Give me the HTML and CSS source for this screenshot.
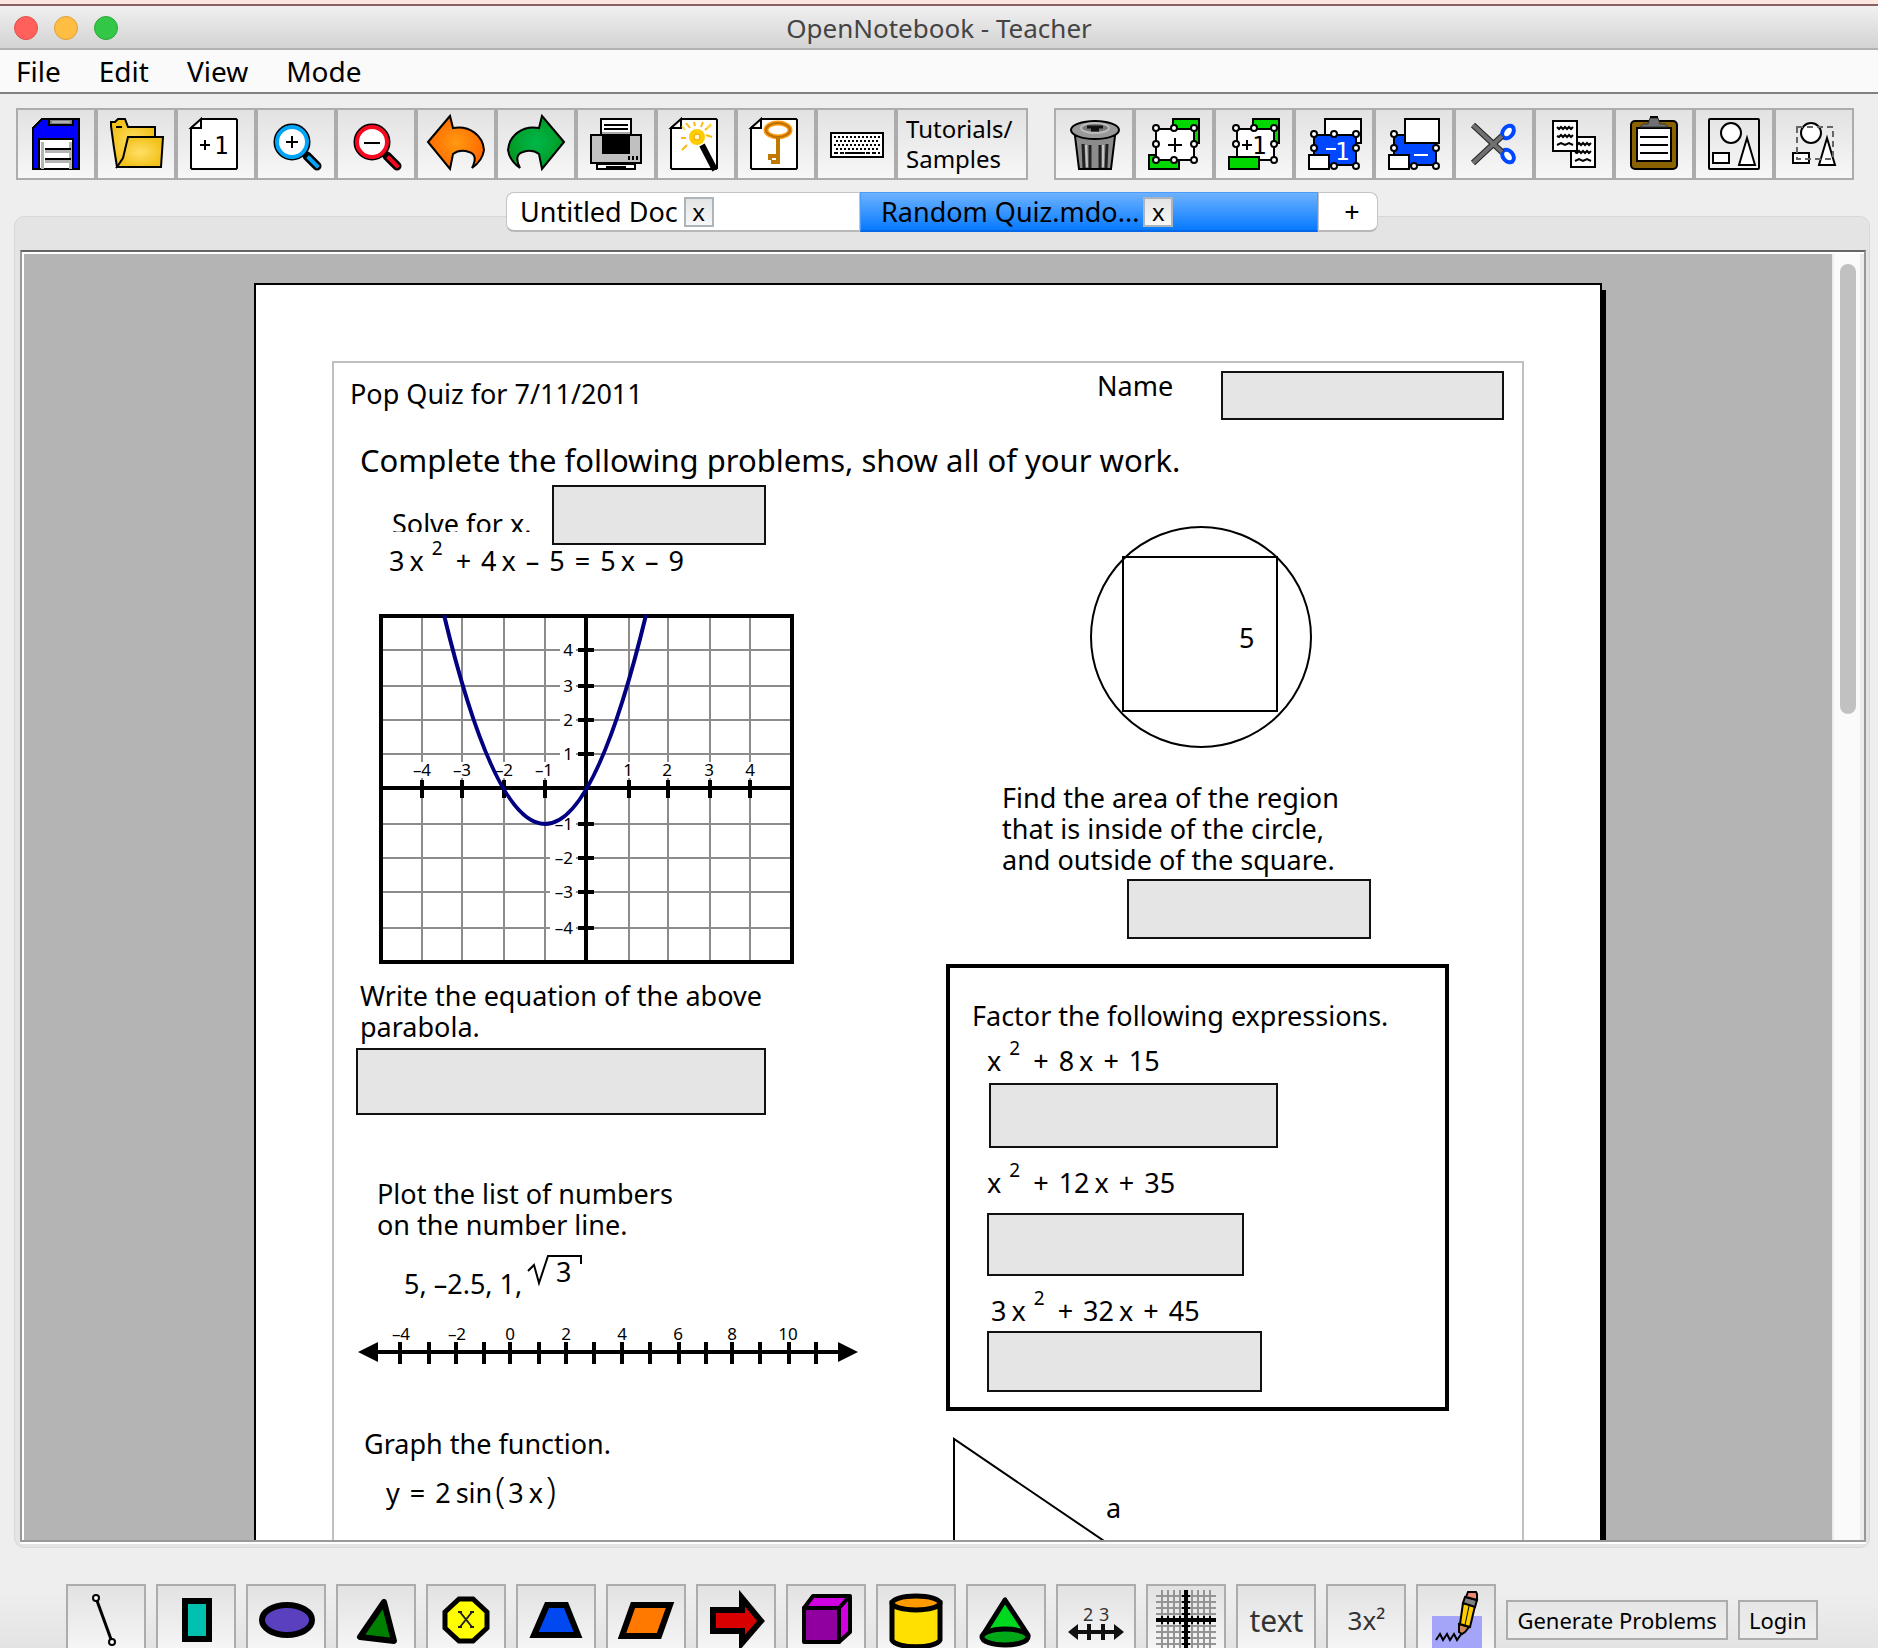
FILE: index.html
```html
<!DOCTYPE html>
<html lang="en">
<head>
<meta charset="utf-8">
<title>OpenNotebook - Teacher</title>
<link rel="stylesheet" href="styles.css">
</head>
<body>
<svg class="defs" aria-hidden="true">
  <defs>
    <radialGradient id="orange"><stop offset="0" stop-color="#ff9a10"/><stop offset="1" stop-color="#ff6a00"/></radialGradient>
    <radialGradient id="green"><stop offset="0" stop-color="#00b84a"/><stop offset="1" stop-color="#009a24"/></radialGradient>
    <radialGradient id="folder"><stop offset="0" stop-color="#ffe066"/><stop offset="1" stop-color="#f2c21c"/></radialGradient>
    <symbol id="page" viewBox="0 0 80 72">
      <path d="M26 11H60L61 12V60L60 61H16L15 60V20Z" fill="#fff" stroke="#000" stroke-width="2"/>
      <path d="M15 20L25 11V20Z" fill="#fff" stroke="#000" stroke-width="2"/>
    </symbol>
    <symbol id="turn" viewBox="0 0 80 72">
      <path d="M12 34L34 8L37 20C54 17 67 28 68 42C67 50 63 55 56 60C60 52 60 46 53 44C47 42 41 43 37 46L34 61Z" stroke="#000" stroke-width="2"/>
    </symbol>
    <symbol id="glass" viewBox="0 0 80 72">
      <path d="M51 48L61 58" stroke="#000" stroke-width="9" stroke-linecap="round"/>
      <path d="M53 50L61 58" stroke="currentColor" stroke-width="4" stroke-linecap="square"/>
      <circle cx="36" cy="34" r="15" fill="#fff" stroke="#000" stroke-width="7"/>
      <circle cx="36" cy="34" r="15" fill="#fff" stroke="currentColor" stroke-width="4"/>
    </symbol>
    <symbol id="shapes" viewBox="0 0 80 72">
      <circle cx="37" cy="25" r="10" fill="#fff" stroke="#000" stroke-width="2"/>
      <path d="M19 45H35V55H19ZM53 30L61 57H45Z" fill="#fff" stroke="#000" stroke-width="2"/>
    </symbol>
  </defs>
</svg>
<div class="window">
  <header class="titlebar">
    <div class="lights"><button class="light red" aria-label="Close"></button><button class="light amber" aria-label="Minimize"></button><button class="light lime" aria-label="Zoom"></button></div>
    <h1 class="title">OpenNotebook - Teacher</h1>
  </header>
  <nav class="menubar">
    <button class="menu">File</button><button class="menu">Edit</button><button class="menu">View</button><button class="menu">Mode</button>
  </nav>
  <div class="toolbars">
    <div class="group">
      <button class="tool" aria-label="Save"><svg class="icon crisp" viewBox="0 0 80 72"><path d="M26 11H63V61H17V20Z" fill="#00f" stroke="#000" stroke-width="2"/><path d="M33 11H57V17H33Z" fill="#808080" stroke="#000" stroke-width="2"/><path d="M36 14H54" stroke="#b0b0b0" stroke-width="2"/><path d="M23 61V31H57V61Z" fill="#fff" stroke="#000" stroke-width="2"/><path d="M26 61V34M54 34V61M29 43H55M29 53H55" stroke="#b4b4b4" stroke-width="3"/><path d="M29 41H55M29 51H55" stroke="#000" stroke-width="2"/></svg></button>
      <button class="tool" aria-label="Open"><svg class="icon" viewBox="0 0 80 72"><path d="M21 59L18 40L15 18V14H19L22 11H29L32 19H59V30L40 45Z" fill="url(#folder)" stroke="#000" stroke-width="2"/><path d="M20 19H26" stroke="#000" stroke-width="2"/><path d="M32 29H67L65 59H21L27 50Z" fill="url(#folder)" stroke="#000" stroke-width="2"/></svg></button>
      <button class="tool" aria-label="Add page"><svg class="icon" viewBox="0 0 80 72"><use href="#page"/><path d="M24 37H34M29 32V42" stroke="#000" stroke-width="2"/><text class="pix" x="38" y="46">1</text></svg></button>
      <button class="tool" aria-label="Zoom in"><svg class="icon sky" viewBox="0 0 80 72"><use href="#glass"/><path d="M30 34H42M36 28V40" stroke="#000" stroke-width="2"/></svg></button>
      <button class="tool" aria-label="Zoom out"><svg class="icon ruby" viewBox="0 0 80 72"><use href="#glass"/><path d="M28 35H44" stroke="#000" stroke-width="2"/></svg></button>
      <button class="tool" aria-label="Undo"><svg class="icon" viewBox="0 0 80 72"><use href="#turn" fill="url(#orange)"/></svg></button>
      <button class="tool" aria-label="Redo"><svg class="icon" viewBox="0 0 80 72"><g transform="matrix(-1 0 0 1 80 0)"><use href="#turn" fill="url(#green)"/></g></svg></button>
      <button class="tool" aria-label="Print"><svg class="icon crisp" viewBox="0 0 80 72"><path d="M15 27H65V55H15Z" fill="#c0c0c0" stroke="#000" stroke-width="2"/><path d="M25 27V11H55V27" fill="#fff" stroke="#000" stroke-width="2"/><path d="M28 17H52M28 21H52" stroke="#000" stroke-width="2"/><path d="M26 24H54V27H26Z" fill="#aaa"/><path d="M26 26H54V46H26Z"/><path d="M53 48V52M57 48V52M61 48V52" stroke="#000" stroke-width="2"/><path d="M21 56H59V61H21Z" fill="#fff" stroke="#000" stroke-width="2"/><path d="M30 59H50" stroke="#000" stroke-width="2"/></svg></button>
      <button class="tool" aria-label="Problem wizard"><svg class="icon" viewBox="0 0 80 72"><use href="#page"/><g stroke="#fdb913" stroke-width="2"><path d="M30 15L34 20M38 14L39 18M47 14L45 19M55 17L49 22M25 30H30M50 27L56 29M31 37L26 42"/><path d="M51 20L55 16M29 22L26 18" stroke="#ffd75a"/></g><path d="M46 37L59 62" stroke="#000" stroke-width="6"/><circle cx="41" cy="29" r="8" fill="#fc0"/><circle cx="41" cy="29" r="3" fill="#fff6c0" stroke="#f0a000"/></svg></button>
      <button class="tool" aria-label="Answer key"><svg class="icon" viewBox="0 0 80 72"><use href="#page"/><ellipse cx="42" cy="22" rx="12" ry="7" fill="#fff" stroke="#ff9a10" stroke-width="5"/><ellipse cx="42" cy="22" rx="12" ry="7" fill="none" stroke="#b87000" stroke-width="2"/><path d="M42 29V56M42 48H34V52M42 54H35" fill="none" stroke="#c07800" stroke-width="4"/></svg></button>
      <button class="tool" aria-label="On screen keyboard"><svg class="icon crisp" viewBox="0 0 80 72"><path d="M15 25H67V49H15Z" fill="#fff" stroke="#000" stroke-width="2"/><path d="M18 29H64M18 37H64" stroke="#000" stroke-width="2" stroke-dasharray="2 2"/><path d="M20 33H64M20 41H64" stroke="#000" stroke-width="2" stroke-dasharray="2 2"/><path d="M18 45H28M50 45H64" stroke="#000" stroke-width="2" stroke-dasharray="4 2"/><path d="M29 45H49" stroke="#000" stroke-width="2"/></svg></button>
      <button class="tool wide">Tutorials/<br>Samples</button>
    </div>
    <div class="group">
      <button class="tool" aria-label="Delete"><svg class="icon" viewBox="0 0 80 72"><path d="M21 28L25 61H57L61 28Z" fill="#8c8c8c" stroke="#000" stroke-width="2"/><path d="M29 36L30 60M36 37V60M46 37V60M53 36L52 60" stroke="#222" stroke-width="3"/><path d="M32 37L33 59M49 37V59" stroke="#c4c4c4" stroke-width="2"/><ellipse cx="41" cy="22" rx="24" ry="9" fill="#999" stroke="#000" stroke-width="2"/><ellipse cx="41" cy="20" rx="14" ry="5" fill="#777" stroke="#bbb" stroke-width="2"/><path d="M33 19H49M37 22H45" stroke="#111" stroke-width="3"/></svg></button>
      <button class="tool" aria-label="Bring to front"><svg class="icon" viewBox="0 0 80 72"><g stroke="#000" stroke-width="2"><path d="M39 11H65V35H39ZM15 47H45V61H15Z" fill="#00d800"/><path d="M22 21H60V52H22Z" fill="#fff"/><path d="M34 37H48M41 30V44"/></g><g class="knob"><circle cx="22" cy="20" r="3"/><circle cx="40" cy="20" r="3"/><circle cx="60" cy="20" r="3"/><circle cx="22" cy="36" r="3"/><circle cx="60" cy="36" r="3"/><circle cx="22" cy="52" r="3"/><circle cx="40" cy="52" r="3"/><circle cx="60" cy="52" r="3"/></g></svg></button>
      <button class="tool" aria-label="Bring forward"><svg class="icon" viewBox="0 0 80 72"><g stroke="#000" stroke-width="2"><path d="M39 11H65V35H39Z" fill="#00d800"/><path d="M23 21H60V52H23Z" fill="#fff"/><path d="M15 49H45V61H15Z" fill="#00d800"/><path d="M28 37H38M33 32V42"/></g><text class="pix" x="38" y="46">1</text><g class="knob"><circle cx="22" cy="20" r="3"/><circle cx="40" cy="20" r="3"/><circle cx="60" cy="20" r="3"/><circle cx="22" cy="36" r="3"/><circle cx="60" cy="36" r="3"/><circle cx="60" cy="52" r="3"/></g></svg></button>
      <button class="tool" aria-label="Send backward"><svg class="icon" viewBox="0 0 80 72"><g stroke="#000" stroke-width="2"><path d="M31 11H67V35H31Z" fill="#fff"/><path d="M20 27H62V57H20Z" fill="#0048ff"/><path d="M15 47H35V61H15Z" fill="#fff"/><path d="M32 41H42" stroke="#fff"/></g><text class="pix pale" x="41" y="52">1</text><g class="knob"><circle cx="20" cy="26" r="3"/><circle cx="40" cy="26" r="3"/><circle cx="62" cy="26" r="3"/><circle cx="20" cy="40" r="3"/><circle cx="62" cy="40" r="3"/><circle cx="40" cy="58" r="3"/><circle cx="62" cy="58" r="3"/></g></svg></button>
      <button class="tool" aria-label="Send to back"><svg class="icon" viewBox="0 0 80 72"><g stroke="#000" stroke-width="2"><path d="M20 27H62V57H20Z" fill="#0048ff"/><path d="M31 11H65V35H31ZM15 47H35V61H15Z" fill="#fff"/><path d="M40 47H54" stroke="#fff"/></g><g class="knob"><circle cx="20" cy="26" r="3"/><circle cx="20" cy="40" r="3"/><circle cx="62" cy="40" r="3"/><circle cx="40" cy="58" r="3"/><circle cx="62" cy="58" r="3"/></g></svg></button>
      <button class="tool" aria-label="Cut"><svg class="icon" viewBox="0 0 80 72"><g fill="#fff" stroke="#0048ff" stroke-width="4"><ellipse cx="54" cy="24" rx="7" ry="5" transform="rotate(-50 54 24)"/><ellipse cx="54" cy="48" rx="7" ry="5" transform="rotate(50 54 48)"/></g><path d="M19 17L48 44M19 55L48 28" stroke="#222" stroke-width="6"/><path d="M19 17L48 44M19 55L48 28" stroke="#707070" stroke-width="4"/></svg></button>
      <button class="tool" aria-label="Copy"><svg class="icon" viewBox="0 0 80 72"><g stroke="#000" stroke-width="2"><path d="M37 29H61V59H37Z" fill="#fff"/><path d="M41 35l2 2 2-2 2 2 2-2 2 2 2-2 2 2 2-2M41 44l2 1 2-2 2 2 2-2 2 2 2-2 2 2 2-2M41 53l4-2 4 2 4-2 4 2" fill="none"/><path d="M19 13H43V43H19Z" fill="#fff"/><path d="M23 19l2 2 2-2 2 2 2-2 2 2 2-2 2 2 2-2M23 28l2 1 2-2 2 2 2-2 2 2 2-2 2 2 2-2M23 37l4-2 4 2 4-2 4 2" fill="none"/></g></svg></button>
      <button class="tool" aria-label="Paste"><svg class="icon" viewBox="0 0 80 72"><rect x="17" y="13" width="46" height="48" rx="4" fill="#8b6200" stroke="#000" stroke-width="2"/><path d="M23 20H57V53H23Z" fill="#fff" stroke="#000" stroke-width="2"/><path d="M26 29H54M26 37H54M26 45H54" stroke="#000" stroke-width="2"/><path d="M26 19L29 16H34L36 10H44L46 16H51L54 19Z" fill="#707070" stroke="#333"/><path d="M36 9H44" stroke="#000" stroke-width="2"/></svg></button>
      <button class="tool" aria-label="Group"><svg class="icon" viewBox="0 0 80 72"><rect x="15" y="11" width="50" height="50" rx="1" fill="none" stroke="#000" stroke-width="2"/><use href="#shapes"/></svg></button>
      <button class="tool" aria-label="Ungroup"><svg class="icon" viewBox="0 0 80 72"><use href="#shapes"/><path d="M23 19H59V51H23Z" fill="none" stroke="#666" stroke-width="2" stroke-dasharray="6 4"/></svg></button>
    </div>
  </div>
  <div class="tabs">
    <div class="tab first"><button class="tabname">Untitled Doc</button><button class="close" aria-label="Close Untitled Doc">x</button></div>
    <div class="tab current"><button class="tabname">Random Quiz.mdo...</button><button class="close" aria-label="Close Random Quiz">x</button></div>
    <button class="tab add">+</button>
  </div>
  <main class="pane">
    <div class="viewport">
      <div class="scroller">
        <article class="sheet">
          <div class="margin"></div>
          <p class="obj pop">Pop Quiz for 7/11/2011</p>
          <label class="obj name" for="name">Name</label>
          <input class="obj answer name-box" id="name">
          <h2 class="obj heading">Complete the following problems, show all of your work.</h2>
          <p class="obj solve">Solve for x.</p>
          <input class="obj answer solve-box" aria-label="Solve for x">
          <div class="obj math eq"><span>3</span><span>x</span><sup>2</sup><i>+</i><span>4</span><span>x</span><i>–</i><span>5</span><i>=</i><span>5</span><span>x</span><i>–</i><span>9</span></div>
          <svg class="obj plot" viewBox="378 613 418 353" role="img" aria-label="Graph of a parabola">
            <path d="M422 616V962M462 616V962M504 616V962M545 616V962M629 616V962M668 616V962M710 616V962M750 616V962M381 650H792M381 686H792M381 720H792M381 754H792M381 824H792M381 858H792M381 892H792M381 928H792" stroke="#8c8c8c" stroke-width="2"/>
            <g fill="#fff"><path d="M411 762H434V778H411ZM451 762H474V778H451ZM493 762H516V778H493ZM533 762H556V778H533ZM620 762H636V778H620ZM660 762H676V778H660ZM702 762H718V778H702ZM742 762H758V778H742Z"/><path d="M560 642H576V658H560ZM560 678H576V694H560ZM560 712H576V728H560ZM560 746H576V762H560ZM550 816H576V832H550ZM550 850H576V866H550ZM550 884H576V900H550ZM550 920H576V936H550Z"/></g>
            <path d="M381 616H792V962H381ZM381 788H792M586 616V962" fill="none" stroke="#000" stroke-width="4"/>
            <path d="M422 780V798M462 780V798M504 780V798M545 780V798M629 780V798M668 780V798M710 780V798M750 780V798M578 650H594M578 686H594M578 720H594M578 754H594M578 824H594M578 858H594M578 892H594M578 928H594" stroke="#000" stroke-width="4"/>
            <g class="ticks mid"><text x="422" y="776">–4</text><text x="462" y="776">–3</text><text x="504" y="776">–2</text><text x="544" y="776">–1</text><text x="628" y="776">1</text><text x="667" y="776">2</text><text x="709" y="776">3</text><text x="750" y="776">4</text></g>
            <g class="ticks end"><text x="573" y="656">4</text><text x="573" y="692">3</text><text x="573" y="726">2</text><text x="573" y="760">1</text><text x="573" y="830">–1</text><text x="573" y="864">–2</text><text x="573" y="898">–3</text><text x="573" y="934">–4</text></g>
            <path d="M444 615Q545 1033 646 615" fill="none" stroke="#000080" stroke-width="4"/>
          </svg>
          <p class="obj write">Write the equation of the above<br>parabola.</p>
          <input class="obj answer write-box" aria-label="Equation of the parabola">
          <p class="obj list">Plot the list of numbers<br>on the number line.</p>
          <p class="obj values">5, –2.5, 1,</p>
          <svg class="obj root" viewBox="526 1254 58 38" role="img" aria-label="Square root of 3"><path d="M528 1271L534 1265L539 1283L548 1256H581V1264" fill="none" stroke="#000" stroke-width="2"/><text class="radicand" x="556" y="1282">3</text></svg>
          <svg class="obj numline" viewBox="356 1320 506 46" role="img" aria-label="Number line">
            <path d="M376 1352H840" stroke="#000" stroke-width="4"/>
            <path d="M358 1352L378 1342V1362ZM858 1352L838 1342V1362Z"/>
            <path d="M400 1342V1364M429 1342V1364M456 1342V1364M484 1342V1364M510 1342V1364M539 1342V1364M566 1342V1364M594 1342V1364M622 1342V1364M650 1342V1364M679 1342V1364M706 1342V1364M732 1342V1364M760 1342V1364M789 1342V1364M816 1342V1364" stroke="#000" stroke-width="4"/>
            <g class="ticks mid"><text x="401" y="1340">–4</text><text x="457" y="1340">–2</text><text x="510" y="1340">0</text><text x="566" y="1340">2</text><text x="622" y="1340">4</text><text x="678" y="1340">6</text><text x="732" y="1340">8</text><text x="788" y="1340">10</text></g>
          </svg>
          <p class="obj func">Graph the function.</p>
          <div class="obj math sine"><span>y</span><i>=</i><span>2</span><span>sin</span><b>(</b><span>3</span><span>x</span><b>)</b></div>
          <svg class="obj circle" viewBox="1088 524 226 226" role="img" aria-label="Square inside a circle"><circle cx="1201" cy="637" r="110" fill="none" stroke="#000" stroke-width="2"/><path d="M1123 557H1277V711H1123Z" fill="none" stroke="#000" stroke-width="2"/></svg>
          <p class="obj five">5</p>
          <p class="obj find">Find the area of the region<br>that is inside of the circle,<br>and outside of the square.</p>
          <input class="obj answer find-box" aria-label="Area of the region">
          <div class="obj frame"></div>
          <p class="obj factor">Factor the following expressions.</p>
          <div class="obj math ex1"><span>x</span><sup>2</sup><i>+</i><span>8</span><span>x</span><i>+</i><span>15</span></div>
          <input class="obj answer ex1-box" aria-label="Factor the first expression">
          <div class="obj math ex2"><span>x</span><sup>2</sup><i>+</i><span>12</span><span>x</span><i>+</i><span>35</span></div>
          <input class="obj answer ex2-box" aria-label="Factor the second expression">
          <div class="obj math ex3"><span>3</span><span>x</span><sup>2</sup><i>+</i><span>32</span><span>x</span><i>+</i><span>45</span></div>
          <input class="obj answer ex3-box" aria-label="Factor the third expression">
          <svg class="obj triangle" viewBox="950 1436 300 200" role="img" aria-label="Right triangle"><path d="M955 1636V1439L1245 1636Z" fill="none" stroke="#000" stroke-width="2"/></svg>
          <p class="obj side">a</p>
        </article>
      </div>
      <div class="scrollbar"><div class="thumb"></div></div>
    </div>
  </main>
  <footer class="palette">
    <button class="tool" aria-label="Line"><svg class="icon" viewBox="0 0 80 72"><path d="M30 14L46 58" stroke="#000" stroke-width="3"/><g class="knob"><circle cx="30" cy="14" r="3"/><circle cx="46" cy="58" r="3"/></g></svg></button>
    <button class="tool" aria-label="Rectangle"><svg class="icon" viewBox="0 0 80 72"><path d="M29 17H53V55H29Z" fill="#00c0b0" stroke="#000" stroke-width="6"/></svg></button>
    <button class="tool" aria-label="Oval"><svg class="icon" viewBox="0 0 80 72"><ellipse cx="41" cy="36" rx="25" ry="15" fill="#5a40bf" stroke="#000" stroke-width="6"/></svg></button>
    <button class="tool" aria-label="Triangle"><svg class="icon" viewBox="0 0 80 72"><path d="M48 18L24 53L58 57Z" fill="#008000" stroke="#000" stroke-width="6" stroke-linejoin="round"/></svg></button>
    <button class="tool" aria-label="Polygon"><svg class="icon" viewBox="0 0 80 72"><path d="M33 15H47L61 28V44L47 57H33L19 44V28Z" fill="#ff0" stroke="#000" stroke-width="5"/><path d="M34 28L46 43M46 28L34 43M32 28H36M44 28H48M32 43H36M44 43H48" stroke="#222" stroke-width="2"/></svg></button>
    <button class="tool" aria-label="Trapezoid"><svg class="icon" viewBox="0 0 80 72"><path d="M31 21H50L62 51H18Z" fill="#0048f0" stroke="#000" stroke-width="6"/></svg></button>
    <button class="tool" aria-label="Parallelogram"><svg class="icon" viewBox="0 0 80 72"><path d="M27 21H64L53 52H16Z" fill="#ff7800" stroke="#000" stroke-width="6"/></svg></button>
    <button class="tool" aria-label="Arrow"><svg class="icon" viewBox="0 0 80 72"><path d="M17 26H46V14L65 37L46 59V47H17Z" fill="#d80000" stroke="#000" stroke-width="6"/></svg></button>
    <button class="tool" aria-label="Cube"><svg class="icon" viewBox="0 0 80 72"><g stroke="#000" stroke-width="4" stroke-linejoin="round"><path d="M18 24L27 12H64L53 24ZM53 24L64 12V48L53 58Z" fill="#d000e0"/><path d="M18 24H53V58H18Z" fill="#9000a0"/></g></svg></button>
    <button class="tool" aria-label="Cylinder"><svg class="icon" viewBox="0 0 80 72"><g stroke="#000" stroke-width="5"><path d="M16 19V56C20 65 60 65 64 56V19Z" fill="#ffe000"/><ellipse cx="40" cy="19" rx="24" ry="7" fill="#ff9a00"/></g></svg></button>
    <button class="tool" aria-label="Cone"><svg class="icon" viewBox="0 0 80 72"><g stroke="#000" stroke-width="5" stroke-linejoin="round"><path d="M39 16L17 51H62Z" fill="#00d820"/><ellipse cx="39" cy="53" rx="23" ry="8" fill="#00a818"/></g></svg></button>
    <button class="tool" aria-label="Number line"><svg class="icon" viewBox="0 0 80 72"><path d="M16 48H64M33 40V56M47 40V56" stroke="#111" stroke-width="4"/><path d="M12 48L22 40V56ZM68 48L58 40V56Z" fill="#111"/><text class="small" x="27" y="37">2</text><text class="small" x="43" y="37">3</text></svg></button>
    <button class="tool" aria-label="Graph"><svg class="icon crisp" viewBox="0 0 80 72"><path d="M10 12H70M10 18H70M10 24H70M10 30H70M10 42H70M10 48H70M10 54H70M10 60H70M16 6V66M22 6V66M28 6V66M34 6V66M46 6V66M52 6V66M58 6V66M64 6V66" stroke="#949494" stroke-width="2"/><path d="M10 36H70M40 6V66" stroke="#000" stroke-width="4"/><path d="M16 32V40M22 32V40M28 32V40M34 32V40M46 32V40M52 32V40M58 32V40M64 32V40M36 12H44M36 18H44M36 24H44M36 30H44M36 42H44M36 48H44M36 54H44M36 60H44" stroke="#000" stroke-width="2"/></svg></button>
    <button class="tool glyph">text</button>
    <button class="tool expr">3x²</button>
    <button class="tool" aria-label="Pencil"><svg class="icon" viewBox="0 0 80 72"><path d="M16 32H66V70H16Z" fill="#a4a4f8"/><path d="M20 56L24 50L27 56L31 50L34 56L38 50L41 56L46 49" fill="none" stroke="#000" stroke-width="2"/><path d="M43 40L53 43L49 48L46 50L43 48Z" fill="#d08858" stroke="#000" stroke-width="2"/><path d="M47 19L59 22L54 43L44 40Z" fill="#fc0" stroke="#000" stroke-width="2"/><path d="M53 22L49 41" stroke="#000"/><path d="M49 13L61 16L59 23L47 19Z" fill="#808080" stroke="#000" stroke-width="2"/><path d="M50 13L52 8H60L61 10V16Z" fill="#f08878" stroke="#000" stroke-width="2"/></svg></button>
    <button class="command">Generate Problems</button>
    <button class="command">Login</button>
  </footer>
</div>
</body>
</html>
```
FILE: styles.css
```css
* { box-sizing: border-box; }
body { margin: 0; background: #eee; color: #000; font-family: "Noto Sans", "Open Sans", sans-serif; overflow: hidden; }
p, h1, h2 { margin: 0; font-weight: 400; }
button { margin: 0; padding: 0; border: 0; background: none; color: inherit; font: inherit; }
.defs { position: absolute; width: 0; height: 0; }

.window { display: flex; flex-direction: column; height: 100vh; border-top: 4px solid #fce6e1; }

/* title bar */
.titlebar { flex: none; display: grid; grid-template-columns: 1fr auto 1fr; align-items: center; height: 46px; padding: 2px 14px 0; border-top: 2px solid #8c5f60; border-bottom: 2px solid #b1b1b1; background: linear-gradient(#f0f0f0, #d3d3d3); }
.lights { display: flex; gap: 16px; }
.light { width: 24px; height: 24px; border-radius: 50%; }
.red { background: #ff605c; border: 1px solid #e0504c; }
.amber { background: #ffbd44; border: 1px solid #dea034; }
.lime { background: #33c748; border: 1px solid #2aa83a; }
.title { grid-column: 2; color: #444; font-size: 26px; line-height: 36px; }

/* menu bar */
.menubar { flex: none; display: flex; gap: 38px; height: 44px; padding: 0 16px; background: #fafafa; border-bottom: 2px solid #808080; }
.menu { font-size: 28px; line-height: 42px; }

/* toolbars */
.toolbars { flex: none; display: flex; gap: 26px; padding: 14px 16px 12px; }
.group { display: flex; }
.tool { flex: none; display: grid; place-items: center; width: 80px; height: 72px; border: 2px solid #acacac; background: linear-gradient(#e2e2e2, #f7f7f7); }
.wide { width: 132px; padding-left: 8px; justify-items: start; text-align: left; font-size: 24px; line-height: 30px; }
.icon { display: block; width: 80px; height: 72px; margin: -2px; }
.crisp { shape-rendering: crispEdges; }
.sky { color: #00a4f8; }
.ruby { color: #f80820; }
.pix { font: 24px "DejaVu Sans Mono", monospace; }
.pale { fill: #fff; }
.small { font-size: 18px; fill: #333; }
.knob { fill: #fff; stroke: #000; stroke-width: 2px; }

/* document tabs */
.tabs { flex: none; position: relative; z-index: 1; display: flex; justify-content: center; height: 40px; margin: 0 8px -16px 14px; }
.tab { display: flex; align-items: center; gap: 6px; height: 40px; padding: 1px 0 0; font-size: 27px; line-height: 36px; background: #fff; border: 1px solid #c4c4c4; border-bottom: 2px solid #b8b8b8; }
.first { width: 354px; padding-left: 13px; border-radius: 8px 0 0 8px; }
.current { width: 458px; padding-left: 20px; gap: 4px; background: linear-gradient(#6cb2ff, #077aff); border-color: #4a9cf8; border-bottom-color: #0668e8; }
.add { width: 60px; padding-left: 8px; justify-content: center; border-radius: 0 8px 8px 0; }
.close { width: 30px; height: 30px; border: 2px solid #acb4bc; background: linear-gradient(#e4e4e4, #f7f7f7); font-size: 24px; line-height: 24px; }

/* document pane */
.pane { flex: 1; min-height: 0; display: flex; margin: 0 8px 0 14px; padding: 33px 3px 5px 5px; border: 1px solid #d8d8d8; border-radius: 10px; background: #e4e4e4; }
.viewport { flex: 1; min-width: 0; display: flex; border: 2px solid #999; border-top-color: #666; padding: 2px 0 0 2px; background: #fff; box-shadow: 0 2px #fff; }
.scroller { flex: 1; min-width: 0; display: flex; justify-content: center; align-items: flex-start; overflow: hidden; background: #b4b4b4; }
.scrollbar { flex: none; width: 32px; padding: 10px 6px; border: 2px solid #ececec; border-width: 0 4px 0 2px; background: #fafafa; }
.thumb { width: 16px; height: 450px; border-radius: 8px; background: #c1c1c1; }

/* the notebook page is a free canvas */
.sheet { flex: none; position: relative; width: 1348px; height: 1744px; margin-top: 29px; border: 2px solid #000; background: #fff; box-shadow: 4px 7px #000; font-size: 27px; line-height: 31px; }
.margin { position: absolute; inset: 76px 76px 76px; border: 2px solid #c0c0c0; }
.obj { position: absolute; white-space: nowrap; }
p.obj, h2.obj, label.obj { padding: 1px 0 0 1px; }
.answer { padding: 4px 8px; border: 2px solid #111; border-radius: 0; background: #e5e5e5; font: inherit; }
.math { display: flex; gap: 5px; align-items: baseline; padding-top: 1px; }
.math i { margin: 0 5px; font-style: normal; }
.math sup { position: relative; top: -16px; margin: 0 3px; font-size: 19px; line-height: 20px; vertical-align: baseline; }
.math b { margin: 0 -2px; font-size: 36px; font-weight: 300; line-height: 31px; }
.ticks { font-size: 17px; }
.mid { text-anchor: middle; }
.end { text-anchor: end; }
.radicand { font-size: 27px; }

.pop { left: 93px; top: 92px; }
.name { left: 840px; top: 84px; }
.name-box { left: 965px; top: 86px; width: 283px; height: 49px; }
.heading { left: 103px; top: 156px; font-size: 31px; line-height: 36px; }
.solve { left: 135px; top: 222px; height: 25px; overflow: hidden; }
.solve-box { left: 296px; top: 200px; width: 214px; height: 60px; }
.eq { left: 133px; top: 259px; }
.plot { left: 122px; top: 328px; width: 418px; height: 353px; }
.write { left: 103px; top: 694px; }
.write-box { left: 100px; top: 763px; width: 410px; height: 67px; }
.list { left: 120px; top: 892px; }
.values { left: 147px; top: 982px; }
.root { left: 270px; top: 969px; width: 58px; height: 38px; }
.numline { left: 100px; top: 1035px; width: 506px; height: 46px; }
.func { left: 107px; top: 1142px; }
.sine { left: 130px; top: 1188px; }
.circle { left: 832px; top: 239px; width: 226px; height: 226px; }
.five { left: 982px; top: 336px; }
.find { left: 745px; top: 496px; }
.find-box { left: 871px; top: 594px; width: 244px; height: 60px; }
.frame { left: 690px; top: 679px; width: 503px; height: 447px; border: 4px solid #000; }
.factor { left: 715px; top: 714px; }
.ex1 { left: 731px; top: 759px; }
.ex1-box { left: 733px; top: 798px; width: 289px; height: 65px; }
.ex2 { left: 731px; top: 881px; }
.ex2-box { left: 731px; top: 928px; width: 257px; height: 63px; }
.ex3 { left: 735px; top: 1009px; }
.ex3-box { left: 731px; top: 1046px; width: 275px; height: 61px; }
.triangle { left: 693px; top: 1151px; width: 300px; height: 200px; }
.side { left: 849px; top: 1206px; }

/* drawing palette, its lower edge runs under the window frame */
.palette { flex: none; display: flex; justify-content: center; align-items: center; gap: 10px; padding: 36px 8px 0 14px; margin-bottom: -8px; background: linear-gradient(#eee 40%, #e2e2e2); }
.glyph { font-size: 30px; color: #333; }
.expr { font-size: 26px; color: #333; }
.command { height: 40px; padding: 0 9px; border: 2px solid #acacac; background: linear-gradient(#e6e6e6, #eee); font-size: 22px; line-height: 36px; }
```
